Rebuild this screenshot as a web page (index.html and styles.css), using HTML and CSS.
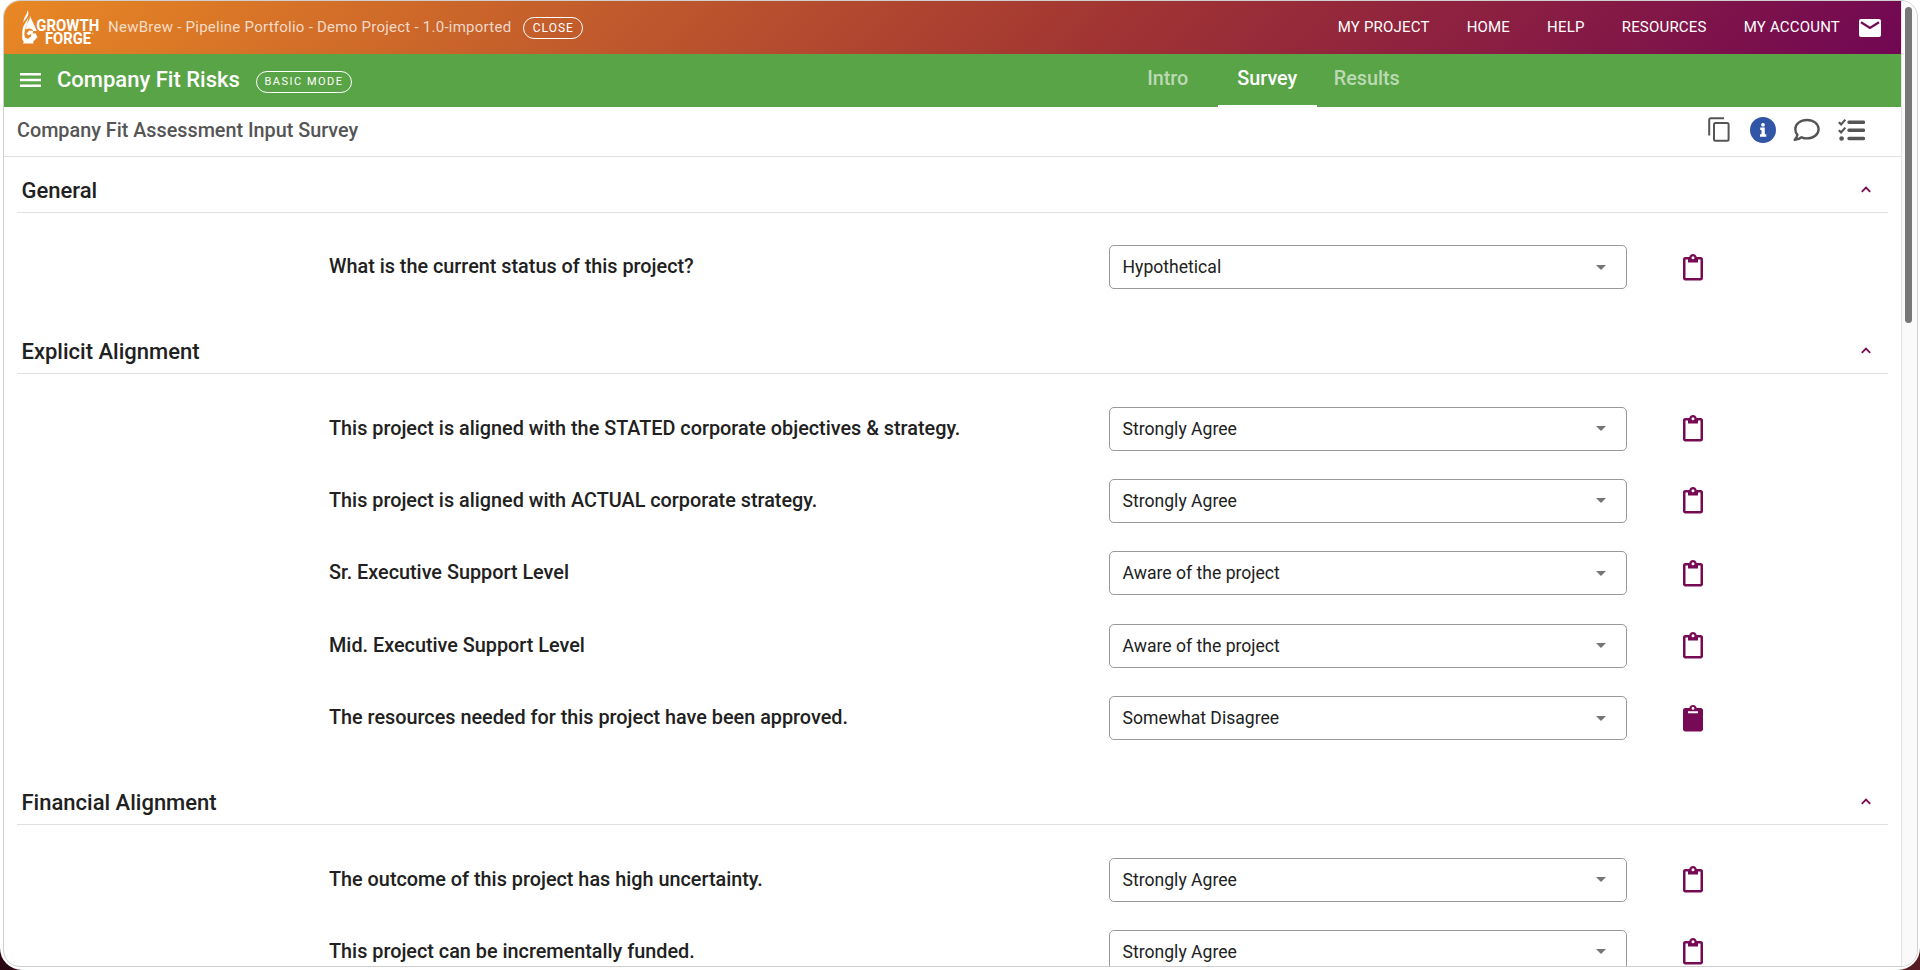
FILE: index.html
```html
<!DOCTYPE html>
<html lang="en">
<head>
    <meta charset="UTF-8">
    <meta name="viewport" content="width=device-width, initial-scale=1.0">
    <title>Company Fit Risks</title>
    <link rel="stylesheet" href="styles.css">
</head>
<body>

<!-- icons used more than once -->
<svg class="defs" width="0" height="0">
    <symbol id="clip" viewBox="0 0 20 27">
        <path fill="currentColor" fill-rule="evenodd" d="M2.2 3H6.3C6.8 1.2 8.2 0 10 0s3.2 1.2 3.7 3h4.1C19 3 20 4 20 5.2v19.1c0 1.2-1 2.2-2.2 2.2H2.2C1 26.5 0 25.5 0 24.3V5.2C0 4 1 3 2.2 3zM2.5 5.6v18.3h15V5.6H15v2.900H5V5.600zM10 2.200a1.500 1.500 0 1 0 0 3 1.500 1.500 0 0 0 0-3z"/>
    </symbol>
    <symbol id="clip-full" viewBox="0 0 20 27">
        <path fill="currentColor" fill-rule="evenodd" d="M2.2 3H6.3C6.8 1.2 8.2 0 10 0s3.2 1.2 3.7 3h4.1C19 3 20 4 20 5.2v19.1c0 1.2-1 2.2-2.2 2.2H2.2C1 26.5 0 25.5 0 24.3V5.2C0 4 1 3 2.2 3zM5 6.3v2h10v-2zM10 2a1.400 1.400 0 1 0 0 2.800A1.400 1.400 0 0 0 10 2z"/>
    </symbol>
    <symbol id="up" viewBox="0 0 10 7">
        <path fill="none" stroke="currentColor" stroke-width="1.8" d="M.8 5.8L5 1.6l4.2 4.2"/>
    </symbol>
</svg>

<div class="window">
    <div class="page">
        <header class="topbar">
            <svg class="logo" width="80" height="36" viewBox="0 0 80 36">
                <path fill="#fff" d="M5.3 0C6.1 4 1 7 1.5 13 2.5 9.5 6.4 7 6.4 3.5 6.4 2 6 1 5.3 0z"/>
                <path fill="#fff" d="M7.800 5.500c.6 2.500-.6 4.500-1.800 6.500-1.500 2.500-2.200 5-1.600 7.500 2.200-1.800 5.600-1 7.100 1.500h3.300C12.500 15.500 10 10.500 7.800 5.500z"/>
                <path fill="#fff" d="M6.300 6.500C6 10.500 2 13.500.8 18c-.8 3-.3 5.500-.6 8.500-.2 2.500.5 4 1.600 5L1 33.500h10.500l-.3-2 4.300-4.300-2-4-2.700.2.400-2.400-4-.6-2.800 3.300 2.300 1.500 2.300-1.200.3 2.300-3.200 2.500c-2.500-.2-3.900-2-3.700-4.300C2.500 19.500 6.300 13 6.300 6.500z"/>
                <text class="logo-text" x="14.3" y="21" textLength="63" lengthAdjust="spacingAndGlyphs">GROWTH</text>
                <text class="logo-text" x="23" y="33.7" textLength="46" lengthAdjust="spacingAndGlyphs">FORGE</text>
                <circle cx="70.7" cy="23.5" r=".8" fill="#fff" opacity=".6"/>
            </svg>
            <span class="project">NewBrew - Pipeline Portfolio - Demo Project - 1.0-imported</span>
            <button class="pill close">CLOSE</button>
            <nav class="menu">
                <a>MY PROJECT</a>
                <a>HOME</a>
                <a>HELP</a>
                <a>RESOURCES</a>
                <a>MY ACCOUNT</a>
            </nav>
            <svg class="mail" width="22" height="18" viewBox="0 0 22 18">
                <rect width="22" height="18" rx="2" fill="#fff"/>
                <path d="M2 3.300l9 5.700 9-5.700" fill="none" stroke="#760a55" stroke-width="2.200"/>
            </svg>
        </header>

        <div class="toolbar">
            <svg class="burger" width="21" height="14" viewBox="0 0 21 14">
                <path fill="#fff" d="M0 0h21v2.400H0zM0 5.800h21v2.400H0zM0 11.600h21V14H0z"/>
            </svg>
            <h1 class="title">Company Fit Risks</h1>
            <button class="pill mode">BASIC MODE</button>
            <div class="tabs">
                <a class="tab">Intro</a>
                <a class="tab active">Survey</a>
                <a class="tab">Results</a>
            </div>
        </div>

        <div class="subbar">
            <h2 class="subtitle">Company Fit Assessment Input Survey</h2>
            <div class="tools">
                <svg width="22" height="26" viewBox="0 0 22 26">
                    <path d="M1.200 18.500V3c0-1 .7-1.800 1.700-1.800H16" fill="none" stroke="#555" stroke-width="2"/>
                    <rect x="6" y="6" width="14.600" height="17.800" rx="1.500" fill="none" stroke="#555" stroke-width="2"/>
                </svg>
                <svg class="info" width="26" height="26" viewBox="0 0 26 26">
                    <circle cx="13" cy="13" r="13" fill="#3156a7"/>
                    <path fill="#fff" d="M10.200 10.600h4.600v6.700h1.500v2.400H10v-2.400h1.500V13h-1.300z"/>
                    <circle cx="13" cy="7.800" r="1.900" fill="#fff"/>
                </svg>
                <svg width="27" height="26" viewBox="0 0 27 26">
                    <path d="M14 3c6.600 0 11.600 4 11.600 9.200s-5 9.200-11.600 9.200c-2 0-3.800-.4-5.400-1.100-2 1.600-4.400 2.600-6.900 2.600 1.400-1.500 2.400-3.200 2.700-5.200C3.100 16.200 2.300 14.300 2.300 12.200 2.300 7 7.300 3 14 3z" fill="none" stroke="#555" stroke-width="2.400" stroke-linejoin="round"/>
                </svg>
                <svg width="27" height="26" viewBox="0 0 27 26">
                    <path d="M.8 5.200l2.300 2.200L7.300 2.600M.8 13.200l2.300 2.200 4.200-4.800" fill="none" stroke="#555" stroke-width="2.200"/>
                    <circle cx="3.600" cy="21.500" r="2.300" fill="#555"/>
                    <path d="M11 5.200h14.500M11 13.300h14.500M11 21.500h14.500" stroke="#555" stroke-width="3.400" stroke-linecap="round"/>
                </svg>
            </div>
        </div>

        <main class="survey">
            <section class="group">
                <div class="group-head">
                    <h3>General</h3>
                    <svg class="chevron"><use href="#up"/></svg>
                </div>
                <div class="rows">
                    <div class="row">
                        <label>What is the current status of this project?</label>
                        <div class="select">Hypothetical</div>
                        <svg class="note"><use href="#clip"/></svg>
                    </div>
                </div>
            </section>

            <section class="group">
                <div class="group-head">
                    <h3>Explicit Alignment</h3>
                    <svg class="chevron"><use href="#up"/></svg>
                </div>
                <div class="rows">
                    <div class="row">
                        <label>This project is aligned with the STATED corporate objectives &amp; strategy.</label>
                        <div class="select">Strongly Agree</div>
                        <svg class="note"><use href="#clip"/></svg>
                    </div>
                    <div class="row">
                        <label>This project is aligned with ACTUAL corporate strategy.</label>
                        <div class="select">Strongly Agree</div>
                        <svg class="note"><use href="#clip"/></svg>
                    </div>
                    <div class="row">
                        <label>Sr. Executive Support Level</label>
                        <div class="select">Aware of the project</div>
                        <svg class="note"><use href="#clip"/></svg>
                    </div>
                    <div class="row">
                        <label>Mid. Executive Support Level</label>
                        <div class="select">Aware of the project</div>
                        <svg class="note"><use href="#clip"/></svg>
                    </div>
                    <div class="row">
                        <label>The resources needed for this project have been approved.</label>
                        <div class="select">Somewhat Disagree</div>
                        <svg class="note"><use href="#clip-full"/></svg>
                    </div>
                </div>
            </section>

            <section class="group">
                <div class="group-head">
                    <h3>Financial Alignment</h3>
                    <svg class="chevron"><use href="#up"/></svg>
                </div>
                <div class="rows">
                    <div class="row">
                        <label>The outcome of this project has high uncertainty.</label>
                        <div class="select">Strongly Agree</div>
                        <svg class="note"><use href="#clip"/></svg>
                    </div>
                    <div class="row">
                        <label>This project can be incrementally funded.</label>
                        <div class="select">Strongly Agree</div>
                        <svg class="note"><use href="#clip"/></svg>
                    </div>
                </div>
            </section>
        </main>
    </div>
    <div class="scrollbar"><div class="thumb"></div></div>
</div>

</body>
</html>
```
FILE: styles.css
```css
* {
    box-sizing: border-box;
    margin: 0;
    padding: 0;
}
html {
    background: linear-gradient(90deg, #2a0613, #561b24);
}
body {
    height: 970px;
    overflow: hidden;
    font-family: Roboto, "Liberation Sans", sans-serif;
    color: #212121;
    background-color: #fff;
    border-radius: 0 0 22px 22px;
    padding: 0 2px 3px 3px;
}
.defs {
    position: absolute;
}
.window {
    display: flex;
    height: 967px;
    border: 1px solid #cfcfcf;
    border-radius: 17px;
    overflow: hidden;
}
.page {
    flex: 1;
    overflow: hidden;
}
.scrollbar {
    width: 16px;
    background-color: #fafafa;
    border-left: 1px solid #e4e4e4;
    padding: 6px 0 0 3px;
}
.thumb {
    width: 7px;
    height: 316px;
    border-radius: 4px;
    background-color: #777;
}

.topbar {
    display: flex;
    align-items: center;
    height: 53px;
    padding-left: 18px;
    padding-right: 20px;
    background: linear-gradient(135deg, #e88824 0%, #a03333 59%, #710753 100%);
}
.logo {
    margin-top: 1px;
    overflow: visible;
}
.logo-text {
    font-size: 15.7px;
    font-weight: 700;
    fill: #fff;
}
.project {
    margin-left: 6px;
    margin-top: -1px;
    font-size: 15px;
    letter-spacing: 0.25px;
    color: rgba(255, 255, 255, 0.75);
}
.pill {
    border: 1px solid #fff;
    border-radius: 12px;
    background: none;
    color: #fff;
    font-family: inherit;
}
.close {
    width: 60px;
    height: 22px;
    margin-left: 12px;
    font-size: 12px;
    letter-spacing: 1px;
}
.menu {
    display: flex;
    gap: 37px;
    margin-left: auto;
    margin-top: -1px;
    font-size: 15px;
    letter-spacing: 0.2px;
    color: #fff;
}
.mail {
    margin-left: 19px;
    margin-top: 1px;
}

.toolbar {
    display: flex;
    align-items: center;
    height: 53px;
    padding-left: 16px;
    background-color: #58a446;
    color: #fff;
}
.burger {
    margin-top: -2px;
}
.title {
    width: 199px;
    margin-left: 16px;
    margin-top: -2px;
    font-size: 22px;
    font-weight: 500;
    white-space: nowrap;
}
.mode {
    width: 96px;
    height: 22px;
    margin-top: 2px;
    font-size: 11px;
    letter-spacing: 1.5px;
}
.tabs {
    display: flex;
    height: 53px;
    margin-left: 766px;
}
.tab {
    width: 99.5px;
    height: 53px;
    line-height: 49px;
    text-align: center;
    font-size: 19.8px;
    font-weight: 500;
    color: rgba(255, 255, 255, 0.6);
}
.active {
    color: #fff;
    border-bottom: 2px solid #fff;
}

.subbar {
    display: flex;
    align-items: center;
    justify-content: space-between;
    height: 50px;
    padding: 0 36px 3px 13px;
    border-bottom: 1px solid #e0e0e0;
}
.subtitle {
    font-size: 19.8px;
    font-weight: 500;
    color: #555;
}
.tools {
    display: flex;
    gap: 18px;
    margin-top: -1px;
}
.tools svg {
    display: block;
}
.tools .info {
    margin-left: 1px;
    margin-right: -1px;
}
.tools svg:first-child {
    margin-right: 1px;
}

.survey {
    padding: 0 13px;
}
.group-head {
    display: flex;
    align-items: center;
    justify-content: space-between;
    height: 56px;
    padding: 12px 17px 0 4.5px;
    border-bottom: 1px solid #e0e0e0;
}
.group-head h3 {
    font-size: 22px;
    font-weight: 500;
}
.chevron {
    width: 10px;
    height: 7px;
    margin-top: -3px;
    color: #760a55;
}
.rows {
    padding: 18px 0 15px 312px;
}
.row {
    display: flex;
    align-items: center;
    height: 72.4px;
}
.row label {
    width: 780px;
    margin-top: -1px;
    font-size: 19.82px;
    font-weight: 500;
}
.select {
    display: flex;
    align-items: center;
    justify-content: space-between;
    width: 518px;
    height: 44px;
    padding: 0 20px 0 12.5px;
    border: 1px solid #999;
    border-radius: 5px;
    font-size: 17.6px;
}
.select::after {
    content: "";
    border: 5.5px solid transparent;
    border-top-color: #757575;
    border-bottom: none;
}
.note {
    width: 20px;
    height: 27px;
    margin-left: 56px;
    color: #760a55;
}
```
